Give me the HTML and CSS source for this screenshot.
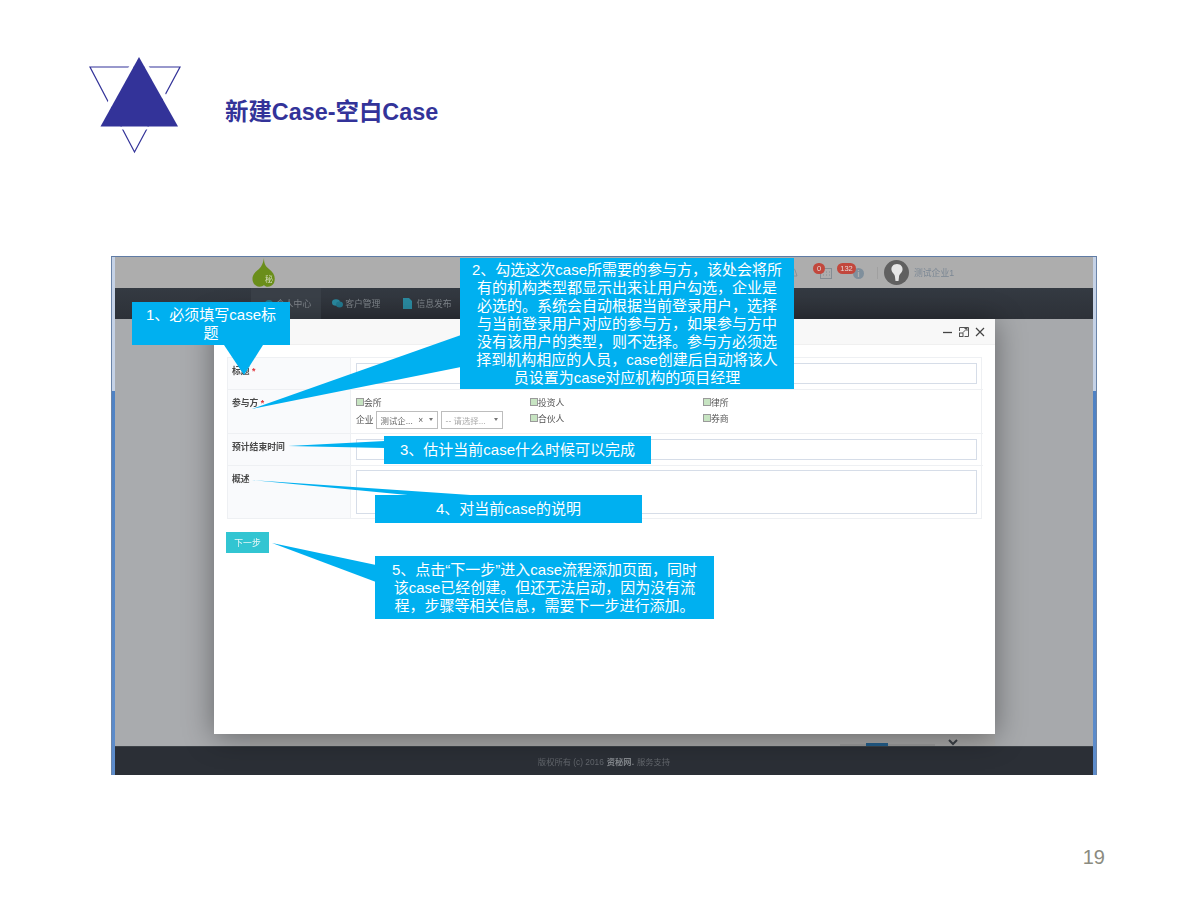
FILE: index.html
```html
<!DOCTYPE html>
<html lang="zh-CN">
<head>
    <meta charset="UTF-8">
    <title>新建Case-空白Case</title>
    <link rel="stylesheet" href="styles.css">
</head>
<body>
    <div class="slide">
        <header class="slide-head">
            <svg class="logo" width="93" height="98" viewBox="0 0 93 98">
                <polygon points="1,11 91,11 45.500,96" fill="none" stroke="#333399" stroke-width="1.200"/>
                <path d="M50,-6 L98,73.500 L2,73.500 Z M50,1 L89,70.500 L11.500,70.500 Z" fill="#fff" fill-rule="evenodd"/>
                <polygon points="50,1 89,70.500 11.500,70.500" fill="#333399"/>
            </svg>
            <h1 class="slide-title">新建Case-空白Case</h1>
        </header>

        <div class="shot">
            <div class="shot-inner">
                <div class="topbar">
                    <svg class="leaf" width="24" height="30" viewBox="0 0 24 30">
                        <path d="M12,0 C12,5 13,8 17,11 C22,15 24,19 22,25 C20,29 14,30 12,27 C9,30 3,29 1,24 C-1,18 3,14 7,11 C10,8 11,5 12,0 Z" fill="#6a8e1a"/>
                    </svg>
                    <span class="leaf-text">秘</span>
                    <div class="topbar-right">
                        <svg class="top-icon bell" width="10" height="12" viewBox="0 0 10 12">
                            <path d="M1,9 C2,7 2,5 3,3 C4,1 6,1 7,3 C8,5 8,7 9,9 Z" fill="none" stroke="#8d9296" stroke-width="1"/>
                        </svg>
                        <span class="badge badge-round">0</span>
                        <svg class="top-icon" width="12" height="12" viewBox="0 0 12 12">
                            <rect x="0.500" y="1.500" width="11" height="10" fill="none" stroke="#858c92"/>
                            <path d="M3,5H4M6,5H7M9,5H10M3,8H4M6,8H7M9,8H10" stroke="#858c92"/>
                        </svg>
                        <span class="badge badge-wide">132</span>
                        <span class="info-dot">i</span>
                        <span class="top-sep"></span>
                        <span class="avatar">
                            <svg width="14" height="18" viewBox="0 0 14 18">
                                <path d="M7,0 C11,0 13,3 12.500,6 C12,9 9,10 9,13 L8.500,17 L5.500,17 L5,13 C5,10 2,9 1.500,6 C1,3 3,0 7,0 Z" fill="#e6e6e6"/>
                            </svg>
                        </span>
                        <span class="user-name">测试企业1</span>
                    </div>
                </div>

                <nav class="navbar">
                    <a class="nav-item nav-active"><span class="nav-icon nav-dot"></span>个人中心</a>
                    <a class="nav-item nav-chat-item">
                        <svg class="nav-icon" width="11" height="9" viewBox="0 0 11 9">
                            <ellipse cx="4" cy="3.500" rx="4" ry="3.300" fill="#2a8aa0"/>
                            <ellipse cx="7.500" cy="5.500" rx="3.500" ry="3" fill="#237a90"/>
                        </svg>客户管理</a>
                    <a class="nav-item">
                        <svg class="nav-icon nav-doc" width="9" height="11" viewBox="0 0 9 11">
                            <path d="M0,0H6L9,3V11H0Z" fill="#2a8aa0"/>
                        </svg>信息发布</a>
                </nav>

                <div class="backdrop">
                    <div class="pager-row">
                        <span class="pager"><i class="pager-on"></i></span>
                        <svg class="chevron" width="10" height="7" viewBox="0 0 10 7">
                            <path d="M1,1 L5,5 L9,1" fill="none" stroke="#3b4046" stroke-width="2"/>
                        </svg>
                    </div>
                </div>

                <footer class="foot">版权所有 (c) 2016 <b>资秘网.</b> 服务支持</footer>

                <div class="modal">
                    <div class="modal-head">
                        <svg width="10" height="10" viewBox="0 0 10 10"><path d="M0,5.500H9" stroke="#444" stroke-width="1.300"/></svg>
                        <svg width="10" height="10" viewBox="0 0 10 10">
                            <path d="M0.500,4V0.500H9.500V9.500H5.500M4,5.500L8,1.500M5.500,1.500H8V4" fill="none" stroke="#555"/>
                            <rect x="0.500" y="6" width="3.500" height="3.500" fill="none" stroke="#555"/>
                        </svg>
                        <svg width="10" height="10" viewBox="0 0 10 10"><path d="M1,1L9,9M9,1L1,9" stroke="#444" stroke-width="1.200"/></svg>
                    </div>
                    <div class="modal-body">
                        <div class="form-table">
                            <div class="form-label">标题 <em>*</em></div>
                            <div class="form-cell"><div class="text-input input-title"></div></div>

                            <div class="form-label">参与方 <em>*</em></div>
                            <div class="form-cell party-grid">
                                <label class="check"><i></i>会所</label>
                                <label class="check"><i></i>投资人</label>
                                <label class="check"><i></i>律所</label>
                                <div class="party-ent">
                                    企业
                                    <span class="select">测试企... <b>×</b> <u></u></span>
                                    <span class="select select-empty">-- 请选择... <u></u></span>
                                </div>
                                <label class="check"><i></i>合伙人</label>
                                <label class="check"><i></i>券商</label>
                            </div>

                            <div class="form-label">预计结束时间</div>
                            <div class="form-cell"><div class="text-input input-title"></div></div>

                            <div class="form-label">概述</div>
                            <div class="form-cell cell-desc"><div class="text-input input-area"></div></div>
                        </div>
                        <button class="next-btn">下一步</button>
                    </div>
                </div>
            </div>
        </div>

        <div class="page-num">19</div>

        <!-- callout tails, in slide coordinates -->
        <svg class="tails" width="1200" height="900" viewBox="0 0 1200 900">
            <polygon points="224,345 263,345 244,375" />
            <polygon points="461,335 461,367 252,409" />
            <polygon points="385,441 385,448 288,446" />
            <polygon points="252,480 485,496 418,496" />
            <polygon points="272,543 376,565 376,582" />
        </svg>

        <div class="callout callout-1">1、必须填写case标<br>题</div>
        <div class="callout callout-2">2、勾选这次case所需要的参与方，该处会将所<br>有的机构类型都显示出来让用户勾选，企业是<br>必选的。系统会自动根据当前登录用户，选择<br>与当前登录用户对应的参与方，如果参与方中<br>没有该用户的类型，则不选择。参与方必须选<br>择到机构相应的人员，case创建后自动将该人<br>员设置为case对应机构的项目经理</div>
        <div class="callout callout-3">3、估计当前case什么时候可以完成</div>
        <div class="callout callout-4">4、对当前case的说明</div>
        <div class="callout callout-5">5、点击“下一步”进入case流程添加页面，同时<br>该case已经创建。但还无法启动，因为没有流<br>程，步骤等相关信息，需要下一步进行添加。</div>
    </div>
</body>
</html>
```

FILE: styles.css
```css
* {
    box-sizing: border-box;
}

body {
    margin: 0;
    background: #fff;
    font-family: "Liberation Sans", "Noto Sans CJK SC", sans-serif;
}

.slide {
    position: relative;
    width: 1200px;
    height: 900px;
    overflow: hidden;
}

.slide-head {
    display: flex;
    align-items: center;
    height: 154px;
    padding: 56px 0 0 89px;
}

.logo {
    flex: none;
    overflow: visible;
}

.slide-title {
    margin: 10px 0 0 43px;
    font-size: 23.400px;
    font-weight: bold;
    color: #333399;
}

/* embedded screenshot */
.shot {
    width: 986px;
    height: 519px;
    margin: 102px 0 0 111px;
    padding: 0 3px;
    border-top: 1px solid #5f7ba5;
    border-left: 1px solid #6b84a8;
    border-right: 1px solid #6b84a8;
    background: linear-gradient(#c5d2e6 134px, #4f82c4 134px, #5d8ccb);
    overflow: hidden;
}

.shot-inner {
    position: relative;
    display: flex;
    flex-direction: column;
    height: 100%;
    filter: blur(0.35px);
}

.topbar {
    position: relative;
    display: flex;
    align-items: center;
    flex: none;
    height: 31px;
    padding-left: 137px;
    background: #adadad;
}

.leaf {
    margin-top: 1px;
}

.leaf-text {
    position: absolute;
    left: 150px;
    top: 16px;
    font-size: 8px;
    color: #d7dfc2;
}

.topbar-right {
    position: relative;
    display: flex;
    align-items: center;
    margin-left: 520px;
    height: 100%;
}

.top-icon {
    flex: none;
}

.bell {
    margin-left: -8px;
}

.badge {
    position: relative;
    display: flex;
    align-items: center;
    justify-content: center;
    flex: none;
    height: 11px;
    font-size: 7.500px;
    color: #e6d8d6;
    background: #c2473c;
    border-radius: 6px;
}

.badge-round {
    width: 12px;
    margin: -8px -5px 0 15px;
}

.badge-wide {
    width: 19px;
    margin: -8px 0 0 5px;
}

.info-dot {
    display: flex;
    align-items: center;
    justify-content: center;
    width: 11px;
    height: 11px;
    margin: 2px 0 0 -3px;
    font-size: 9px;
    font-weight: bold;
    color: #adadad;
    background: #7f8f9c;
    border-radius: 50%;
}

.top-sep {
    width: 1px;
    height: 12px;
    margin: 0 6px 0 13px;
    background: #a0a0a0;
}

.avatar {
    display: flex;
    align-items: center;
    justify-content: center;
    width: 25px;
    height: 25px;
    background: #606060;
    border-radius: 50%;
}

.user-name {
    margin-left: 5px;
    font-size: 8.800px;
    color: #7b8794;
    white-space: nowrap;
}

.navbar {
    display: flex;
    flex: none;
    height: 31px;
    padding-left: 136px;
    background: linear-gradient(#343a42, #2d3138);
}

.nav-item {
    display: flex;
    align-items: center;
    padding: 0 11px 0 12px;
    font-size: 8.800px;
    color: #80868c;
}

.nav-active {
    padding: 0 10px 0 14px;
    background: #3a4048;
}

.nav-chat-item {
    padding-left: 11px;
}

.nav-icon {
    flex: none;
    margin-right: 2px;
}

.nav-dot {
    width: 8px;
    height: 8px;
    margin-right: 3px;
    background: #24768a;
    border-radius: 50%;
}

.nav-doc {
    margin-right: 4px;
}

.backdrop {
    display: flex;
    flex-direction: column;
    justify-content: flex-end;
    flex: 1;
    background: linear-gradient(90deg, #a9abae 135px, #a8a8a8 135px, #a8a8a8 880px, #a7a9ac 880px);
}

.pager-row {
    display: flex;
    align-items: flex-end;
    height: 10px;
    padding-left: 725px;
}

.pager {
    display: flex;
    width: 95px;
    height: 2px;
    background: #9b9b9b;
}

.pager-on {
    width: 22px;
    height: 3px;
    margin: -1px 0 0 26px;
    background: #245f8c;
}

.chevron {
    margin: 0 0 0 13px;
}

.foot {
    display: flex;
    align-items: center;
    justify-content: center;
    gap: 3px;
    flex: none;
    height: 29px;
    font-size: 8.300px;
    color: #62666c;
    background: #2b2f36;
    border-top: 1px solid #3d4248;
}

.foot b {
    font-weight: bold;
    color: #83878c;
}

/* dialog lying over the captured page */
.modal {
    position: absolute;
    left: 99px;
    top: 62px;
    width: 781px;
    height: 415px;
    background: #fff;
    box-shadow: 0 3px 28px rgba(0, 0, 0, 0.4);
}

.modal-head {
    display: flex;
    align-items: center;
    justify-content: flex-end;
    gap: 6px;
    height: 26px;
    padding-right: 10px;
    background: #f8f8f8;
    border-bottom: 1px solid #f0f0f0;
}

.modal-body {
    padding: 12px 13px 0;
}

.form-table {
    display: grid;
    grid-template-columns: 123px 632px;
    grid-template-rows: 32px 44px 32px 52px;
    border: 1px solid #eef0f3;
}

.form-label {
    padding: 6px 4px;
    font-size: 8.800px;
    font-weight: bold;
    color: #4a4a4a;
    background: #f9fafc;
    border-right: 1px solid #eef0f3;
    border-bottom: 1px solid #eef0f3;
}

.form-label em {
    font-style: normal;
    color: #e0343a;
}

.form-cell {
    padding: 5px 5px 0;
    border-bottom: 1px solid #eef0f3;
}

.form-label:nth-last-child(2),
.form-cell:last-child {
    border-bottom: 0;
}

.cell-desc {
    padding-top: 4px;
}

.text-input {
    width: 621px;
    background: #fff;
    border: 1px solid #d6dde8;
}

.input-title {
    height: 21px;
}

.input-area {
    height: 44px;
}

.party-grid {
    display: grid;
    grid-template-columns: 174px 173px 1fr;
    grid-template-rows: 16px 20px;
    padding-top: 6px;
}

.check {
    display: flex;
    align-items: center;
    height: 12px;
    font-size: 8.800px;
    color: #555;
}

.check i {
    width: 8px;
    height: 8px;
    background: #c7e4c2;
    border: 1px solid #9a9a9a;
}

.party-ent {
    display: flex;
    align-items: center;
    gap: 2px;
    height: 19px;
    margin-top: -2px;
    font-size: 8.800px;
    color: #555;
}

.select {
    display: flex;
    align-items: center;
    justify-content: space-between;
    width: 62px;
    height: 18px;
    padding: 0 4px;
    font-size: 8.400px;
    color: #666;
    border: 1px solid #bdbdbd;
}

.select b {
    font-weight: normal;
    color: #555;
}

.select u {
    border-top: 3px solid #777;
    border-left: 2.500px solid transparent;
    border-right: 2.500px solid transparent;
}

.select-empty {
    margin-left: 1px;
    color: #aaa;
}

.next-btn {
    display: block;
    width: 43px;
    height: 21px;
    margin: 13px 0 0 -1px;
    padding: 0;
    font-family: inherit;
    font-size: 8.800px;
    color: #e8f7f7;
    background: #32c5d2;
    border: 0;
}

.page-num {
    margin-top: 71px;
    padding-right: 95px;
    text-align: right;
    font-size: 20px;
    color: #8b8b80;
}

/* annotations over the screenshot */
.tails {
    position: absolute;
    left: 0;
    top: 0;
    fill: #00b0f0;
}

.callout {
    position: absolute;
    display: flex;
    align-items: center;
    justify-content: center;
    text-align: center;
    font-size: 15px;
    line-height: 18px;
    color: #fff;
    background: #00b0f0;
}

.callout-1 {
    left: 132px;
    top: 302px;
    width: 158px;
    height: 43px;
}

.callout-2 {
    left: 460px;
    top: 258px;
    width: 334px;
    height: 131px;
}

.callout-3 {
    left: 384px;
    top: 436px;
    width: 267px;
    height: 28px;
}

.callout-4 {
    left: 375px;
    top: 495px;
    width: 267px;
    height: 28px;
}

.callout-5 {
    left: 375px;
    top: 556px;
    width: 339px;
    height: 63px;
}
```
